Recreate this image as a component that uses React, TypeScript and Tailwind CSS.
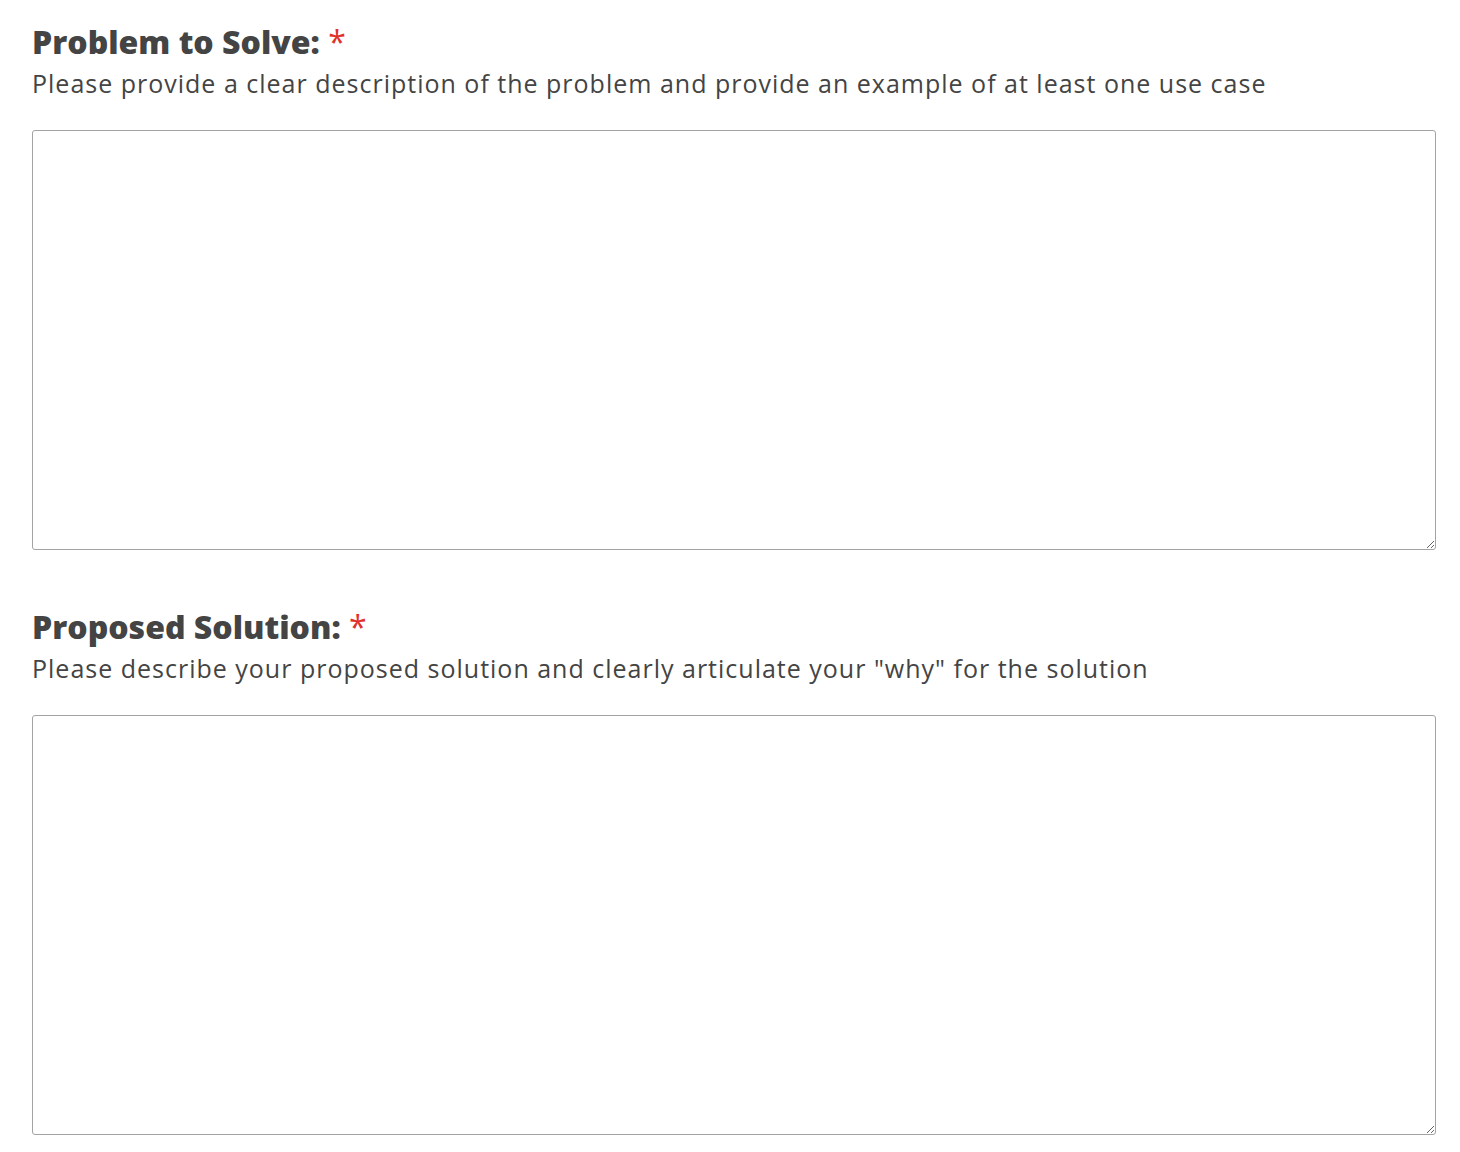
import React from 'react';

interface FieldProps {
  label: string;
  hint: string;
}

function Field({ label, hint }: FieldProps) {
  return (
    <div className="flex flex-col">
      <label className="text-[32px] leading-[40px] font-extrabold text-[#444444]">
        {label} <span className="text-[#e0322b] font-normal">*</span>
      </label>
      <p className="text-[25px] leading-[32px] text-[#444444] mt-[5px] tracking-[1px]">{hint}</p>
      <textarea className="mt-[31px] h-[420px] w-full border border-[#a3a3a3] rounded-[3px] resize-y bg-white" />
    </div>
  );
}

export default function App() {
  return (
    <div
      className="min-h-screen bg-white pl-[32px] pr-[24px] pt-[22px] flex flex-col gap-[57px]"
      style={{ fontFamily: '"Open Sans", Lato, sans-serif' }}
    >
      <Field
        label="Problem to Solve:"
        hint="Please provide a clear description of the problem and provide an example of at least one use case"
      />
      <Field
        label="Proposed Solution:"
        hint={'Please describe your proposed solution and clearly articulate your "why" for the solution'}
      />
    </div>
  );
}
